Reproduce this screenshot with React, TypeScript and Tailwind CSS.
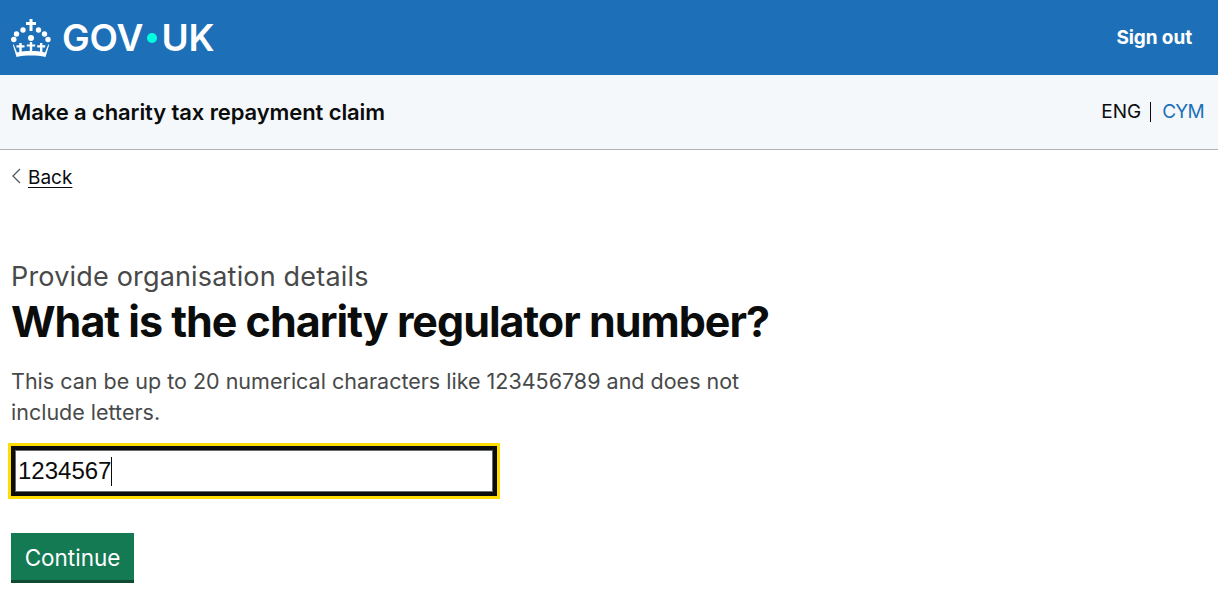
const font = "font-['Inter','Liberation_Sans',sans-serif]";

function Crown() {
	return (
		<svg viewBox="0 0 40 40" className="w-10 h-10 shrink-0" fill="white">
			<path d="M18.500 1h3v3h3.500v3h-3.500v6h-3V7H15V4h3.500z" />
			<circle cx="12" cy="12" r="2.700" />
			<circle cx="27.500" cy="12" r="2.700" />
			<circle cx="5.500" cy="16" r="2.700" />
			<circle cx="33.500" cy="16" r="2.700" />
			<circle cx="20" cy="20" r="3" />
			<circle cx="2.800" cy="21.500" r="2.700" />
			<circle cx="37" cy="21.500" r="2.700" />
			<path d="M18.800 24h2.400v2.400h3v2.200h-3V33h-2.400v-4.400h-3v-2.200h3z" />
			<path d="M8.300 25h2.400v2.300h2.800v2.100h-2.800V34H8.300v-4.600H5.500v-2.100h2.800z" />
			<path d="M29 25h2.400v2.300h2.800v2.100h-2.800V34H29v-4.600h-2.800v-2.100H29z" />
			<path d="M2.500 26 6 34.500c4.500-1.200 9-1.600 14-1.600s9.500.4 14 1.600l3.500-8.500.5 1.200L34.500 39c-4.500-1-9.500-1.400-14.500-1.400S10 38 5.500 39L2 27.200z" />
		</svg>
	);
}

export default function App() {
	return (
		<div className={`min-h-[613px] bg-white text-[#0b0c0c] ${font}`}>
			<header className="h-[75px] bg-[#1d70b8] flex items-center justify-between pl-[11px] pr-[26px] text-white">
				<div className="flex items-center gap-[11px]">
					<Crown />
					<span className="text-[37px] font-semibold leading-none tracking-[-0.1px] flex items-center">
						GOV
						<span className="w-[10px] h-[10px] rounded-full bg-[#00ffe0] mx-[4px]" />
						UK
					</span>
				</div>
				<a className="text-[19px] font-bold tracking-[-0.1px] pt-[1px]">Sign out</a>
			</header>
			<div className="h-[75px] bg-[#f4f8fb] border-b border-[#b1b4b6] flex items-center justify-between pl-[11px] pr-[14px]">
				<span className="text-[22px] font-semibold tracking-[-0.1px]">
					Make a charity tax repayment claim
				</span>
				<div className="flex items-center text-[19px]">
					<span>ENG</span>
					<span className="w-px h-[20px] bg-[#0b0c0c] ml-[9px] mr-[11px]" />
					<a className="text-[#1d70b8] tracking-[-0.7px]">CYM</a>
				</div>
			</div>
			<main className="pl-[11px]">
				<a className="mt-[15px] flex items-center gap-[7px] text-[19px] leading-[26px]">
					<svg viewBox="0 0 10 16" className="w-[10px] h-[16px] -mt-[4px]" fill="none" stroke="#505a5f" strokeWidth="1.300">
						<path d="M9 1 2 8l7 7" />
					</svg>
					<span className="underline underline-offset-[3px]">Back</span>
				</a>
				<p className="mt-[71px] text-[27px] tracking-[0.18px] leading-[30px] text-[#484949]">Provide organisation details</p>
				<h1 className="text-[43px] leading-[58px] font-bold tracking-[-1px]">What is the charity regulator number?</h1>
				<p className="mt-[16px] w-[760px] text-[21.5px] leading-[31px] text-[#484949]">
					This can be up to 20 numerical characters like 123456789 and does not include letters.
				</p>
				<div className="mt-[15px] w-[492px] h-[56px] -ml-[3px] bg-[#ffdd00] p-[3px]">
					<div className="h-full border-[4px] border-[#0b0c0c]">
						<div className="h-full border border-[#6a6a6a] bg-white flex items-center pl-[2px] font-['Liberation_Sans',sans-serif] text-[24px]">
							1234567
							<span className="w-px h-[29px] bg-[#0b0c0c]" />
						</div>
					</div>
				</div>
				<button className="mt-[34px] block w-[123px] h-[50px] bg-[#137a53] border-b-[3px] border-[#0f4a33] text-white text-[22.5px] pt-[2px]">
					Continue
				</button>
			</main>
		</div>
	);
}
